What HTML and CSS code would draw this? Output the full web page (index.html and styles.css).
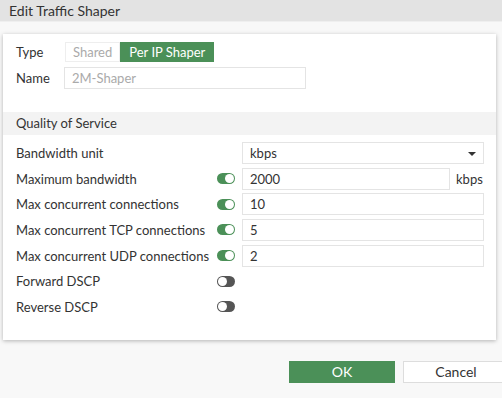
FILE: index.html
```html
<!DOCTYPE html>
<html lang="en">
<head>
  <meta charset="UTF-8">
  <title>Edit Traffic Shaper</title>
  <link rel="stylesheet" href="styles.css">
</head>
<body>
  <div class="titlebar">Edit Traffic Shaper</div>

  <div class="content">
    <div class="panel">
      <div class="field">
        <span class="field-label">Type</span>
        <div class="switcher">
          <span class="opt">Shared</span>
          <span class="opt active">Per IP Shaper</span>
        </div>
      </div>
      <div class="field">
        <span class="field-label">Name</span>
        <div class="text-box name-box muted">2M-Shaper</div>
      </div>

      <div class="section-head">Quality of Service</div>

      <div class="qos">
        <span class="qos-label">Bandwidth unit</span>
        <div class="text-box wide">kbps<span class="caret"></span></div>

        <span class="qos-label">Maximum bandwidth</span>
        <span class="toggle on"></span>
        <div class="text-box">2000</div>
        <span class="unit">kbps</span>

        <span class="qos-label">Max concurrent connections</span>
        <span class="toggle on"></span>
        <div class="text-box wide">10</div>

        <span class="qos-label">Max concurrent TCP connections</span>
        <span class="toggle on"></span>
        <div class="text-box wide">5</div>

        <span class="qos-label">Max concurrent UDP connections</span>
        <span class="toggle on"></span>
        <div class="text-box wide">2</div>

        <span class="qos-label">Forward DSCP</span>
        <span class="toggle"></span>

        <span class="qos-label">Reverse DSCP</span>
        <span class="toggle"></span>
      </div>
    </div>

    <div class="footer">
      <button class="btn btn-ok">OK</button>
      <button class="btn btn-cancel">Cancel</button>
    </div>
  </div>
</body>
</html>
```

FILE: styles.css
```css
* {
  box-sizing: border-box;
  margin: 0;
  padding: 0;
  font-family: Lato, "Open Sans", sans-serif;
}

body {
  background-color: #f8f8f8;
  color: #333;
  font-size: 13px;
  width: 502px;
  height: 398px;
  overflow: hidden;
}

.titlebar {
  height: 22px;
  line-height: 21px;
  padding-left: 9px;
  font-size: 14px;
  background-color: #e3e3e3;
  border-bottom: 1px solid #efefef;
}

.content {
  padding: 12px 0 0 3px;
}

/* Panel */
.panel {
  width: 493px;
  background-color: #fff;
  padding: 8px 12px 20px 13px;
  box-shadow: 0 1px 4px rgba(0, 0, 0, 0.28);
}

.field {
  display: flex;
  align-items: center;
  margin-bottom: 5px;
}

.field-label {
  width: 48px;
}

.switcher {
  display: flex;
  height: 20px;
  margin-left: 1px;
}

.switcher .opt {
  display: flex;
  align-items: center;
  padding: 0 7px;
  border: 1px solid #eee;
  color: #aaa;
}

.switcher .opt.active {
  background-color: #4b9058;
  border-color: #4b9058;
  color: #fff;
  padding: 0 8px;
}

.text-box {
  height: 22px;
  border: 1px solid #e4e4e4;
  display: flex;
  align-items: center;
  padding-left: 7px;
  position: relative;
}

.name-box {
  width: 242px;
}

.muted {
  color: #aaa;
}

/* Quality of Service */
.section-head {
  margin: 23px -12px 5px -13px;
  height: 23px;
  line-height: 23px;
  padding-left: 13px;
  background-color: #f3f3f3;
}

.qos {
  display: grid;
  grid-template-columns: 201px 25px 208px 34px;
  grid-auto-rows: 25.7px;
  align-items: center;
}

.qos-label {
  grid-column: 1;
}

.toggle {
  grid-column: 2;
}

.qos .wide {
  grid-column: 3 / span 2;
}

.unit {
  padding-left: 6px;
}

.caret {
  position: absolute;
  right: 7px;
  top: 9px;
  border-left: 4px solid transparent;
  border-right: 4px solid transparent;
  border-top: 4px solid #333;
}

/* Toggles */
.toggle {
  width: 18px;
  height: 11px;
  border-radius: 6px;
  background-color: #555;
  position: relative;
}

.toggle::after {
  content: "";
  position: absolute;
  top: 1px;
  left: 1px;
  width: 9px;
  height: 9px;
  border-radius: 50%;
  background-color: #fff;
}

.toggle.on {
  background-color: #4b9058;
}

.toggle.on::after {
  left: 8px;
}

/* Footer buttons */
.footer {
  display: flex;
  gap: 8px;
  margin-top: 21px;
  padding-left: 286px;
}

.btn {
  flex: none;
  width: 106px;
  height: 22px;
  font-size: 14px;
  border: 1px solid #ddd;
  background-color: #fff;
  color: #333;
}

.btn-ok {
  background-color: #4b9058;
  border-color: #4b9058;
  color: #fff;
}
```
